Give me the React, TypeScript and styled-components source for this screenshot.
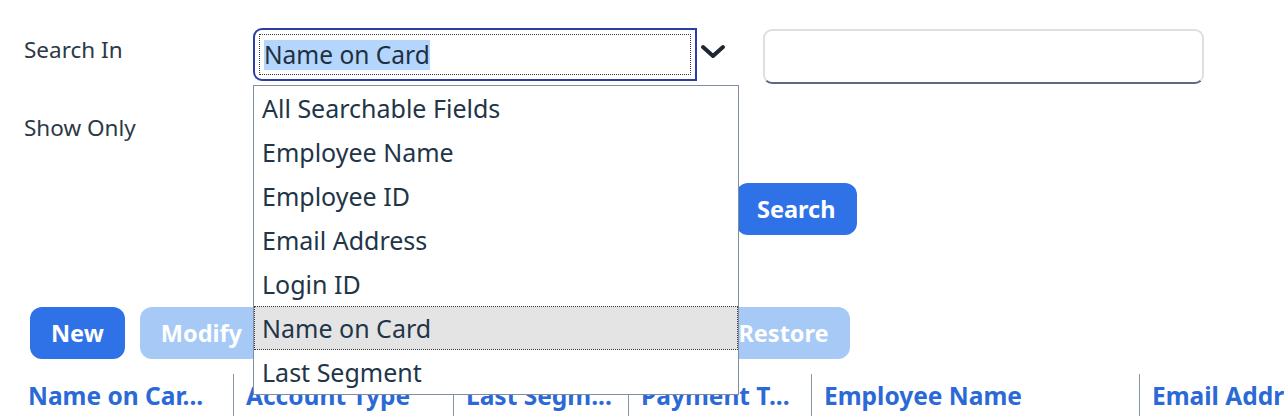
import React from 'react';
import styled, { createGlobalStyle } from 'styled-components';

const GlobalStyle = createGlobalStyle`
  body {
    margin: 0;
    background: #ffffff;
    font-family: "Noto Sans", "Open Sans", sans-serif;
    color: #223548;
  }
`;

const options = [
  'All Searchable Fields',
  'Employee Name',
  'Employee ID',
  'Email Address',
  'Login ID',
  'Name on Card',
  'Last Segment',
];

const columns = [
  { label: 'Name on Car...', width: 217 },
  { label: 'Account Type', width: 220 },
  { label: 'Last Segm...', width: 175 },
  { label: 'Payment T...', width: 183 },
  { label: 'Employee Name', width: 328 },
  { label: 'Email Address', width: 300 },
];

function Chevron() {
  return (
    <ChevronIcon width="28" height="16" viewBox="0 0 28 16">
      <polyline points="4,3 14,12 24,3" fill="none" stroke="#1d2633" strokeWidth="4" strokeLinecap="round" strokeLinejoin="round" />
    </ChevronIcon>
  );
}

export default function App() {
  const selected = 'Name on Card';
  return (
    <Page>
      <GlobalStyle />
      <Form>
        <Row>
          <Label>Search In</Label>
          <SelectWrap>
            <SelectBox>
              <FocusRing>
                <Highlight>{selected}</Highlight>
              </FocusRing>
            </SelectBox>
            <Listbox>
              {options.map((o) => (
                <Option key={o} $active={o === selected}>{o}</Option>
              ))}
            </Listbox>
          </SelectWrap>
          <Chevron />
          <TextInput />
        </Row>
        <Row $top={22}>
          <Label>Show Only</Label>
        </Row>
        <SearchRow>
          <Button $variant="primary">Search</Button>
        </SearchRow>
      </Form>
      <Toolbar>
        <Button $variant="primary">New</Button>
        <Button $variant="disabled">Modify</Button>
        <Button $variant="disabled">Deactivate</Button>
        <Button $variant="disabled">Reset</Button>
        <Button $variant="disabled">Delete</Button>
        <Button $variant="disabled">Restore</Button>
      </Toolbar>
      <HeaderRow>
        {columns.map((c, i) => (
          <HeaderCell key={c.label} $w={c.width} $first={i === 0}>{c.label}</HeaderCell>
        ))}
      </HeaderRow>
    </Page>
  );
}

const Page = styled.div`
  height: 416px;
  overflow: hidden;
  padding-top: 28px;
  box-sizing: border-box;
`;

const Form = styled.div`
  display: flex;
  flex-direction: column;
`;

const Row = styled.div<{ $top?: number }>`
  display: flex;
  align-items: flex-start;
  margin-top: ${(p) => p.$top || 0}px;
`;

const Label = styled.div`
  width: 253px;
  flex: none;
  padding-left: 24px;
  box-sizing: border-box;
  padding-top: 7px;
  font-size: 22.5px;
  line-height: 30px;
  color: #2c3946;
`;

const SelectWrap = styled.div`
  position: relative;
  z-index: 5;
`;

const SelectBox = styled.div`
  width: 444px;
  height: 53px;
  box-sizing: border-box;
  border: 2px solid #2a3ea3;
  border-radius: 9px 0 0 9px;
  padding: 4px;
  background: #fff;
`;

const FocusRing = styled.div`
  height: 100%;
  box-sizing: border-box;
  border: 1.5px dotted #3a3a3a;
  display: flex;
  align-items: center;
  padding-left: 4px;
`;

const Highlight = styled.span`
  background: #b4d6fd;
  font-size: 24.5px;
  line-height: 30px;
  color: #1f2f40;
`;

const Listbox = styled.div`
  position: absolute;
  top: 57px;
  left: 0;
  width: 486px;
  box-sizing: border-box;
  border: 1px solid #7f8ea1;
  background: #fff;
`;

const Option = styled.div<{ $active?: boolean }>`
  height: 44px;
  box-sizing: border-box;
  display: flex;
  align-items: center;
  padding-left: 7px;
  font-size: 25px;
  color: #223548;
  background: ${(p) => (p.$active ? '#e4e4e4' : 'transparent')};
  border: 1px dotted ${(p) => (p.$active ? '#3c3c3c' : 'transparent')};
`;

const ChevronIcon = styled.svg`
  margin: 16px 0 0 2px;
  flex: none;
`;

const TextInput = styled.div`
  margin-left: 36px;
  width: 441px;
  height: 55px;
  box-sizing: border-box;
  border: 2px solid #dce0e5;
  border-bottom-color: #5c6c7e;
  border-radius: 9px;
  margin-top: 1px;
`;

const SearchRow = styled.div`
  display: flex;
  padding-left: 736px;
  margin-top: 40px;
`;

const Button = styled.button<{ $variant: 'primary' | 'disabled' }>`
  height: 52px;
  padding: 0 21px;
  border: none;
  border-radius: 12px;
  font-family: "Noto Sans", "Open Sans", sans-serif;
  font-weight: 700;
  font-size: 23.5px;
  color: #fff;
  background: ${(p) => (p.$variant === 'primary' ? '#2f71e6' : '#a7c9f5')};
  flex: none;
`;

const Toolbar = styled.div`
  display: flex;
  gap: 15px;
  padding-left: 30px;
  margin-top: 72px;
`;

const HeaderRow = styled.div`
  display: flex;
  margin-top: 15px;
  padding-left: 16px;
  height: 60px;
`;

const HeaderCell = styled.div<{ $w: number; $first?: boolean }>`
  width: ${(p) => p.$w}px;
  flex: none;
  box-sizing: border-box;
  padding: 5px 0 0 12px;
  border-left: ${(p) => (p.$first ? 'none' : '1px solid #8896a5')};
  font-size: 24.5px;
  font-weight: 700;
  color: #2b6ad6;
  white-space: nowrap;
  overflow: hidden;
`;
